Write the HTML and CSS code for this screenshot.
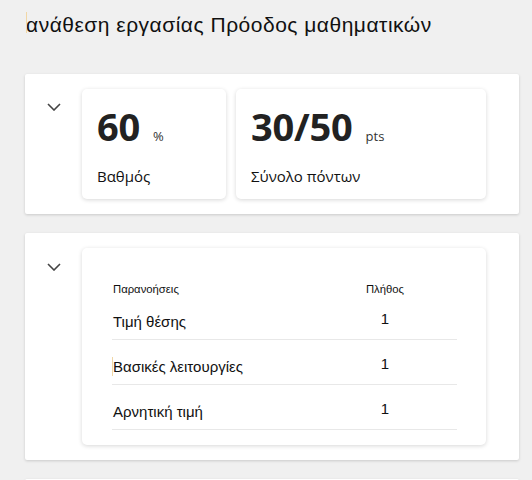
FILE: index.html
```html
<!DOCTYPE html>
<html lang="el">
<head>
<meta charset="utf-8">
<link rel="stylesheet" href="styles.css">
</head>
<body>
<div class="page">
  <h1 class="title"><span class="caret"></span>ανάθεση εργασίας Πρόοδος μαθηματικών</h1>

  <section class="panel">
    <div class="toggle">
      <svg width="14" height="8" viewBox="0 0 14 8"><path d="M1 1 L7 7 L13 1" fill="none" stroke="#444" stroke-width="1.6"/></svg>
    </div>
    <div class="tiles">
      <div class="tile tile-a">
        <div class="value"><span class="num">60</span><span class="unit">%</span></div>
        <div class="label">Βαθμός</div>
      </div>
      <div class="tile tile-b">
        <div class="value"><span class="num">30/50</span><span class="unit">pts</span></div>
        <div class="label">Σύνολο πόντων</div>
      </div>
    </div>
  </section>

  <section class="panel panel-2">
    <div class="toggle">
      <svg width="14" height="8" viewBox="0 0 14 8"><path d="M1 1 L7 7 L13 1" fill="none" stroke="#444" stroke-width="1.6"/></svg>
    </div>
    <div class="table-card">
      <div class="row head">
        <div class="c1">Παρανοήσεις</div>
        <div class="c2">Πλήθος</div>
      </div>
      <div class="row">
        <div class="c1">Τιμή θέσης</div>
        <div class="c2">1</div>
      </div>
      <div class="row">
        <div class="c1"><span class="caret caret-sm"></span>Βασικές λειτουργίες</div>
        <div class="c2">1</div>
      </div>
      <div class="row">
        <div class="c1">Αρνητική τιμή</div>
        <div class="c2">1</div>
      </div>
    </div>
  </section>

  <section class="panel panel-3"></section>
</div>
</body>
</html>
```

FILE: styles.css
```css
html, body {
  margin: 0;
  padding: 0;
  background: #f0f0f0;
  height: 100%;
  overflow: hidden;
}
.page {
  padding: 0 13px 0 25px;
  font-family: "Liberation Sans", Arial, sans-serif;
  color: #111;
}
.title {
  margin: 0;
  padding: 13px 0 0 1px;
  height: 74px;
  box-sizing: border-box;
  font-size: 21px;
  font-weight: normal;
  line-height: 24px;
  letter-spacing: 0.5px;
  color: #111;
  position: relative;
}
.caret {
  display: block;
  width: 1px;
  height: 21px;
  background: #f1d7a6;
  position: absolute;
  left: 1px;
  top: 12px;
}
.panel {
  background: #fff;
  border-radius: 2px;
  box-shadow: 0 1px 3px rgba(0,0,0,0.16);
  display: flex;
  padding: 15px 33px 15px 0;
  margin-bottom: 19px;
}
.toggle {
  width: 57px;
  display: flex;
  justify-content: center;
  align-items: flex-start;
  padding-top: 14px;
  box-sizing: border-box;
}
.toggle svg { display: block; }
.tiles {
  display: flex;
  gap: 10px;
}
.tile {
  background: #fff;
  border-radius: 5px;
  box-shadow: 0 1px 4px rgba(0,0,0,0.16);
  height: 110px;
  box-sizing: border-box;
  padding: 14px 15px 0 15px;
  font-family: "Open Sans", "Noto Sans", sans-serif;
}
.tile-a { width: 144px; }
.tile-b { width: 250px; }
.value {
  display: flex;
  align-items: baseline;
  height: 46px;
  color: #222;
}
.num {
  font-size: 38px;
  font-weight: 700;
  line-height: 46px;
  letter-spacing: -0.2px;
}
.unit {
  font-size: 13px;
  margin-left: 13px;
  color: #333;
}
.label {
  margin-top: 17px;
  font-size: 15px;
  line-height: 20px;
  color: #111;
}
.panel-2 .toggle { padding-top: 15px; }
.table-card {
  width: 404px;
  background: #fff;
  border-radius: 5px;
  box-shadow: 0 1px 4px rgba(0,0,0,0.16);
  box-sizing: border-box;
  padding: 35px 29px 15px 30px;
}
.row {
  display: grid;
  grid-template-columns: 1fr 144px;
  align-items: start;
  height: 45px;
  box-sizing: border-box;
  padding-top: 17px;
  border-bottom: 1px solid #e8e8e8;
  font-size: 15px;
  line-height: 20px;
}
.row .c2 { text-align: center; margin-top: -3px; }
.row.head {
  height: 12px;
  padding-top: 0;
  border-bottom: none;
  font-size: 11.3px;
  line-height: 12px;
}
.row.head .c2 { margin-top: 0; }
.c1 { padding-left: 1px; position: relative; }
.caret-sm {
  left: 0;
  top: 0;
  height: 19px;
}
.panel-3 { height: 40px; margin-bottom: 0; }
```
